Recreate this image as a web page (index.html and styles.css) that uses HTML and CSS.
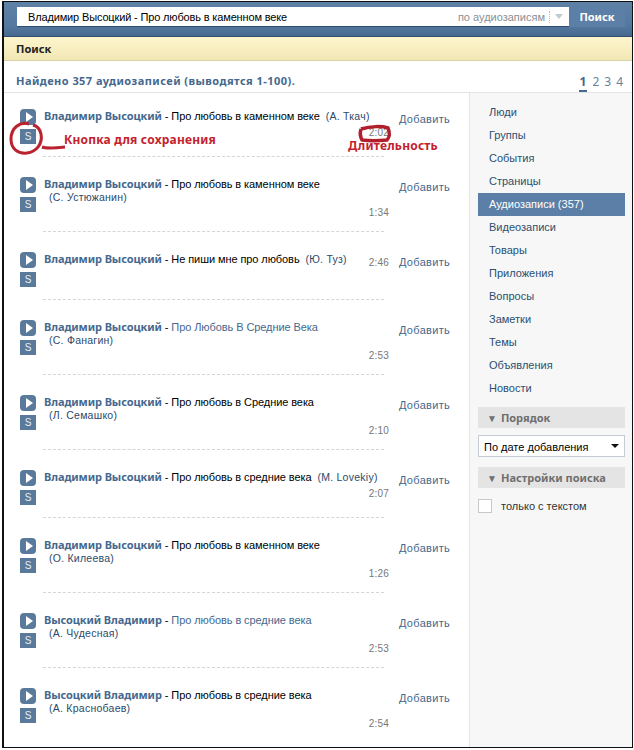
FILE: index.html

```html
<!DOCTYPE html>
<html lang="ru">
<head>
  <meta charset="UTF-8">
  <title>Поиск</title>
  <link rel="stylesheet" href="styles.css">
</head>
<body>
  <div class="page">
    <div class="top">
      <div class="search-box">
        <span class="query">Владимир Высоцкий - Про любовь в каменном веке</span>
        <span class="scope">по аудиозаписям</span>
        <span class="scope-arrow"></span>
      </div>
      <div class="search-btn">Поиск</div>
    </div>
    <div class="title-bar">Поиск</div>
    <div class="summary">
      <span>Найдено 357 аудиозаписей (выводятся 1-100).</span>
      <div class="pages"><b>1</b><span>2</span><span>3</span><span>4</span></div>
    </div>
    <div class="content">
      <div class="results">
        <div class="audio">
          <div class="btns"><div class="play"></div><div class="save">S</div></div>
          <div class="info">
            <div class="name"><b>Владимир Высоцкий</b> - Про любовь в каменном веке <span class="who one">(А. Ткач)</span></div>
            <div class="dur short">2:02</div>
          </div>
          <div class="add">Добавить</div>
        </div>
        <div class="audio">
          <div class="btns"><div class="play"></div><div class="save">S</div></div>
          <div class="info">
            <div class="name"><b>Владимир Высоцкий</b> - Про любовь в каменном веке</div>
            <div class="who">(С. Устюжанин)</div>
            <div class="dur">1:34</div>
          </div>
          <div class="add">Добавить</div>
        </div>
        <div class="audio">
          <div class="btns"><div class="play"></div><div class="save">S</div></div>
          <div class="info">
            <div class="name"><b>Владимир Высоцкий</b> - Не пиши мне про любовь <span class="who one">(Ю. Туз)</span></div>
            <div class="dur same">2:46</div>
          </div>
          <div class="add">Добавить</div>
        </div>
        <div class="audio">
          <div class="btns"><div class="play"></div><div class="save">S</div></div>
          <div class="info">
            <div class="name"><b>Владимир Высоцкий</b> - <a>Про Любовь В Средние Века</a></div>
            <div class="who">(С. Фанагин)</div>
            <div class="dur">2:53</div>
          </div>
          <div class="add">Добавить</div>
        </div>
        <div class="audio">
          <div class="btns"><div class="play"></div><div class="save">S</div></div>
          <div class="info">
            <div class="name"><b>Владимир Высоцкий</b> - Про любовь в Средние века</div>
            <div class="who">(Л. Семашко)</div>
            <div class="dur">2:10</div>
          </div>
          <div class="add">Добавить</div>
        </div>
        <div class="audio">
          <div class="btns"><div class="play"></div><div class="save">S</div></div>
          <div class="info">
            <div class="name"><b>Владимир Высоцкий</b> - Про любовь в средние века <span class="who one">(M. Lovekiy)</span></div>
            <div class="dur short">2:07</div>
          </div>
          <div class="add">Добавить</div>
        </div>
        <div class="audio">
          <div class="btns"><div class="play"></div><div class="save">S</div></div>
          <div class="info">
            <div class="name"><b>Владимир Высоцкий</b> - Про любовь в каменном веке</div>
            <div class="who">(О. Килеева)</div>
            <div class="dur">1:26</div>
          </div>
          <div class="add">Добавить</div>
        </div>
        <div class="audio">
          <div class="btns"><div class="play"></div><div class="save">S</div></div>
          <div class="info">
            <div class="name"><b>Высоцкий Владимир</b> - <a>Про любовь в средние века</a></div>
            <div class="who">(А. Чудесная)</div>
            <div class="dur">2:53</div>
          </div>
          <div class="add">Добавить</div>
        </div>
        <div class="audio last">
          <div class="btns"><div class="play"></div><div class="save">S</div></div>
          <div class="info">
            <div class="name"><b>Высоцкий Владимир</b> - Про любовь в средние века</div>
            <div class="who">(А. Краснобаев)</div>
            <div class="dur">2:54</div>
          </div>
          <div class="add">Добавить</div>
        </div>
      </div>
      <div class="side">
        <div class="menu">
          <div>Люди</div>
          <div>Группы</div>
          <div>События</div>
          <div>Страницы</div>
          <div class="active">Аудиозаписи (357)</div>
          <div>Видеозаписи</div>
          <div>Товары</div>
          <div>Приложения</div>
          <div>Вопросы</div>
          <div>Заметки</div>
          <div>Темы</div>
          <div>Объявления</div>
          <div>Новости</div>
        </div>
        <div class="side-head">Порядок</div>
        <div class="select">По дате добавления</div>
        <div class="side-head second">Настройки поиска</div>
        <div class="check"><span class="box"></span>только с текстом</div>
      </div>
    </div>

    <!-- red notes drawn over the screenshot -->
    <svg class="marks" width="634" height="170" viewBox="0 0 634 170">
      <path d="M29 124 C20 121 11 128 11 139 C11 149 18 154 27 153 C36 152 43 144 41 134 C40 129 37 126 33 125 M42 147 C47 149 56 148 65 147" fill="none" stroke="#b9222e" stroke-width="3"/>
      <path d="M361 129 C371 126 382 126 388 128 C390 133 390 137 387 140 C378 141 369 141 362 140 C360 136 360 132 361 129" fill="none" stroke="#b01f2b" stroke-width="3.5"/>
    </svg>
    <div class="note note-save">Кнопка для сохранения</div>
    <div class="note note-len">Длительность</div>
  </div>
</body>
</html>
```

FILE: styles.css

```css
html, body {
  margin: 0;
  padding: 0;
  background: #fff;
}
body {
  width: 634px;
  height: 750px;
  overflow: hidden;
  font-family: "Liberation Sans", "Noto Sans", sans-serif;
  font-size: 11px;
  color: #000;
}
b {
  font-family: "Noto Sans", "Liberation Sans", sans-serif;
}
.page {
  position: relative;
  box-sizing: border-box;
  width: 631px;
  height: 747px;
  margin: 1px 0 0 2px;
  border: 1px solid #111;
  border-left-width: 2px;
  overflow: hidden;
}
.top {
  display: flex;
  box-sizing: border-box;
  height: 35px;
  padding: 5px 0 0 13px;
  background: linear-gradient(180deg, #5f81a6 0, #54789f 70%, #47698f 100%);
  border-bottom: 1px solid #2f4d70;
}
.search-box {
  display: flex;
  align-items: center;
  box-sizing: border-box;
  flex: 1;
  height: 20px;
  padding: 0 6px 0 11px;
  background: #fff;
  border-bottom: 1px solid #2f4d70;
}
.query {
  flex: 1;
  letter-spacing: -0.15px;
}
.scope {
  color: #8a8f96;
  padding-right: 4px;
  border-right: 1px dotted #bbb;
}
.scope-arrow {
  width: 0;
  height: 0;
  margin-left: 5px;
  border-left: 4px solid transparent;
  border-right: 4px solid transparent;
  border-top: 5px solid #c3c9d0;
}
.search-btn {
  width: 56px;
  margin-right: 7px;
  height: 20px;
  line-height: 20px;
  text-align: center;
  color: #fff;
  font-weight: bold;
  font-family: "Noto Sans", sans-serif;
  background: #5b7fa6;
}
.title-bar {
  box-sizing: border-box;
  height: 24px;
  line-height: 24px;
  padding-left: 12px;
  font-weight: bold;
  font-family: "Noto Sans", sans-serif;
  color: #222;
  background: linear-gradient(180deg, #fdf5cd, #f2e7b4);
  border-bottom: 1px solid #d8d2a8;
}
.summary {
  display: flex;
  justify-content: space-between;
  box-sizing: border-box;
  height: 32px;
  padding: 12px 9px 0 12px;
  font-weight: bold;
  font-family: "Noto Sans", sans-serif;
  color: #45688e;
  letter-spacing: 0.45px;
  border-bottom: 1px solid #e4e4e4;
}
.pages {
  display: flex;
  gap: 5px;
  color: #6a819b;
  font-weight: normal;
  font-size: 12px;
  letter-spacing: 0;
}
.pages b {
  height: 17px;
  padding: 0 1px;
  color: #45688e;
  border-bottom: 2px solid #45688e;
}
.content {
  display: flex;
}
.results {
  box-sizing: border-box;
  width: 465px;
  padding: 16px 0 0 16px;
}
.audio {
  position: relative;
  display: flex;
  box-sizing: border-box;
  width: 431px;
  height: 68px;
}
.audio:has(> .info > div.who) {
  height: 75px;
}
.btns {
  width: 24px;
  flex: none;
}
.play {
  position: relative;
  width: 16px;
  height: 16px;
  border-radius: 4px;
  background: #5a7a9c;
}
.play::after {
  content: "";
  position: absolute;
  left: 6px;
  top: 3px;
  border-left: 7px solid #fff;
  border-top: 5px solid transparent;
  border-bottom: 5px solid transparent;
}
.save {
  width: 16px;
  height: 15px;
  margin-top: 4px;
  line-height: 15px;
  text-align: center;
  font-size: 10px;
  color: #e8eef4;
  background: #5a7a9c;
}
.info {
  position: relative;
  flex: 1;
  min-width: 0;
}
.name b {
  color: #45688e;
  letter-spacing: -0.1px;
}
.name a {
  color: #45688e;
}
.name {
  line-height: 13px;
  white-space: nowrap;
  letter-spacing: -0.08px;
}
.who {
  padding-left: 5px;
  line-height: 13px;
  color: #2b4a6b;
  font-size: 10.5px;
  letter-spacing: 0.25px;
}
.who.one {
  padding-left: 3px;
}
.dur {
  position: absolute;
  right: 11px;
  top: 30px;
  color: #777;
  font-size: 10px;
  letter-spacing: 0.2px;
}
.dur.short {
  top: 18px;
}
.dur.same {
  top: 5px;
}
.add {
  width: 52px;
  margin-top: 4px;
  margin-left: -1px;
  box-sizing: border-box;
  color: #45688e;
  font-size: 11px;
  letter-spacing: 0.3px;
}
.audio::after {
  content: "";
  position: absolute;
  left: 23px;
  right: 67px;
  top: 47px;
  border-top: 1px dashed #d6d6d6;
}
.audio:has(> .info > div.who)::after {
  top: 54px;
}
.audio.last::after {
  display: none;
}
.side {
  box-sizing: border-box;
  flex: 1;
  padding: 8px 7px 0 8px;
  background: #f7f7f7;
  border-left: 1px solid #e4e4e4;
  height: 660px;
}
.menu div {
  height: 23px;
  line-height: 23px;
  padding-left: 11px;
  color: #2b4f70;
}
.menu .active {
  color: #fff;
  background: #5b7fa6;
}
.side-head {
  height: 21px;
  line-height: 21px;
  margin-top: 7px;
  padding-left: 9px;
  font-weight: bold;
  font-family: "Noto Sans", sans-serif;
  color: #6f6f6f;
  background: #e4e4e4;
}
.side-head::before {
  content: "▼";
  font-size: 10px;
  margin-right: 4px;
}
.side-head.second {
  margin-top: 10px;
}
.select {
  position: relative;
  box-sizing: border-box;
  height: 22px;
  line-height: 22px;
  margin-top: 7px;
  padding-left: 5px;
  background: #fff;
  border: 1px solid #c5ccd4;
}
.select::after {
  content: "";
  position: absolute;
  right: 5px;
  top: 8px;
  border-left: 4px solid transparent;
  border-right: 4px solid transparent;
  border-top: 4px solid #111;
}
.check {
  display: flex;
  align-items: center;
  margin-top: 11px;
  color: #333;
}
.box {
  box-sizing: border-box;
  width: 14px;
  height: 14px;
  margin-right: 9px;
  background: #fff;
  border: 1px solid #c8c8c8;
}
.marks {
  position: absolute;
  left: -4px;
  top: -2px;
  pointer-events: none;
}
.note {
  position: absolute;
  color: #c3222d;
  font-weight: bold;
  font-family: "Noto Sans", sans-serif;
  font-size: 12px;
  line-height: 12px;
  letter-spacing: 0.2px;
}
.note-save {
  left: 60px;
  top: 132px;
}
.note-len {
  left: 344px;
  top: 138px;
}
```
